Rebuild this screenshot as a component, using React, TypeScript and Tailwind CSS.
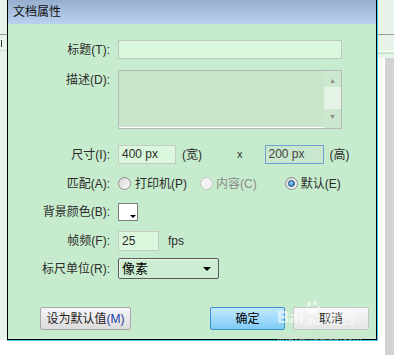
import React from 'react';

const font = { fontFamily: '"Liberation Sans", "Noto Sans CJK SC", sans-serif' };

function Radio({ checked, disabled }: { checked?: boolean; disabled?: boolean }) {
  return (
    <span
      className={`flex h-[13px] w-[13px] shrink-0 items-center justify-center rounded-full border ${
        disabled ? 'border-[#c4c4c4] bg-[#f2f2f2]' : 'border-[#8e8f8f] bg-gradient-to-br from-[#d6d6d6] to-[#fbfbfb]'
      }`}
    >
      {checked && <span className="h-[7px] w-[7px] rounded-full border border-[#1d4f7a] bg-[radial-gradient(circle_at_40%_35%,#8fd0ff,#1f6fb0)]" />}
    </span>
  );
}

function Label({ children, top }: { children: React.ReactNode; top?: boolean }) {
  return (
    <div className={`flex justify-end text-[12px] text-[#2c2c2c] ${top ? 'items-start pt-[1px]' : 'items-center'}`}>
      {children}
    </div>
  );
}

function Dialog() {
  return (
    <div className="flex h-[340px] w-[370px] flex-col border-x border-b border-black bg-[#c7ebcd]" style={font}>
      <div className="flex h-[24px] items-center bg-gradient-to-b from-[#97afcf] to-[#bad2ef] pl-[5px] text-[12px] text-[#111]">
        文档属性
      </div>

      <div className="grid grid-cols-[102px_1fr] gap-x-[8px] pt-[16px]">
        <Label>标题(T):</Label>
        <div className="h-[19px] w-[224px] border border-[#bcc6bc] bg-[#dbf8dc]" />

        <div className="h-[11px]" />
        <div className="h-[11px]" />

        <Label top>描述(D):</Label>
        <div className="flex h-[59px] w-[224px] border border-[#b6bab6] bg-[#c9e6cb] shadow-[inset_-1px_-1px_0_#fff]">
          <div className="flex-1" />
          <div className="flex w-[17px] flex-col items-center bg-[#cde8cf] text-[7px] text-[#888]">
            <span className="mt-[6px] leading-none">▲</span>
            <div className="mt-[3px] h-[22px] w-full bg-[#e4f3e5]" />
            <span className="mt-auto mb-[8px] leading-none">▼</span>
          </div>
        </div>

        <div className="h-[16px]" />
        <div className="h-[16px]" />

        <Label>尺寸(I):</Label>
        <div className="flex h-[19px] items-center text-[12px] text-[#2c2c2c]">
          <div className="flex h-[19px] w-[58px] items-center border border-[#c4ccc4] bg-[#dbf8dc] pl-[3px] pb-[2px]">400 px</div>
          <span className="ml-[6px]">(宽)</span>
          <span className="ml-[35px] pb-[1px] text-[11px]">x</span>
          <div className="ml-[22px] flex h-[19px] w-[59px] items-center border border-[#6f9fd4] bg-[#c9e7cc] pl-[3px] pb-[2px] text-[#444]">200 px</div>
          <span className="ml-[6px]">(高)</span>
        </div>

        <div className="h-[10px]" />
        <div className="h-[10px]" />

        <Label>匹配(A):</Label>
        <div className="flex h-[19px] items-center text-[12px] text-[#2c2c2c]">
          <Radio />
          <span className="ml-[4px]">打印机(P)</span>
          <span className="ml-[13px]"><Radio disabled /></span>
          <span className="ml-[3px] text-[#8a8a8a]">内容(C)</span>
          <span className="ml-[28px]"><Radio checked /></span>
          <span className="ml-[3px]">默认(E)</span>
        </div>

        <div className="h-[10px]" />
        <div className="h-[10px]" />

        <Label>背景颜色(B):</Label>
        <div className="flex h-[18px] items-center">
          <div className="relative h-[18px] w-[20px] border border-[#7c7c7c] bg-white">
            <span className="absolute right-[1px] bottom-[2px] h-0 w-0 border-x-[3px] border-t-[3px] border-x-transparent border-t-black" />
          </div>
        </div>

        <div className="h-[10px]" />
        <div className="h-[10px]" />

        <Label>帧频(F):</Label>
        <div className="flex h-[20px] items-center text-[12px] text-[#2c2c2c]">
          <div className="flex h-[20px] w-[41px] items-center border border-[#c4ccc4] bg-[#dbf8dc] pl-[3px]">25</div>
          <span className="ml-[9px]">fps</span>
        </div>

        <div className="h-[7px]" />
        <div className="h-[7px]" />

        <Label>标尺单位(R):</Label>
        <div className="flex h-[21px] w-[101px] items-center justify-between rounded-[2px] border border-[#5a5a5a] bg-[#cdeed2] pl-[3px] pr-[7px] text-[13px] text-black shadow-[inset_1px_1px_0_#e9f8ea]">
          <span>像素</span>
          <span className="h-0 w-0 border-x-[4px] border-t-[4px] border-x-transparent border-t-black" />
        </div>
      </div>

      <div className="mt-[28px] flex h-[23px] items-stretch pl-[32px] pr-[7px] text-[12px]">
        <div className="flex w-[91px] items-center justify-center rounded-[2px] border border-[#a9a9a9] bg-gradient-to-b from-[#f6f6f6] to-[#dcdcdc] text-[#222]">
          设为默认值<span className="text-[#1c3aa8]">(M)</span>
        </div>
        <div className="ml-auto flex w-[75px] items-center justify-center rounded-[2px] border border-[#3c8fd0] bg-gradient-to-b from-[#c4eafe] to-[#7ecbf6] text-black">
          确定
        </div>
        <div className="ml-[8px] flex w-[76px] items-center justify-center rounded-[2px] border border-[#c4c4c4] bg-gradient-to-b from-[#f8f8f8] to-[#e6e6e6] text-[#222]">
          取消
        </div>
      </div>
    </div>
  );
}

export default function App() {
  return (
    <div className="relative flex h-[355px] w-[394px] overflow-hidden bg-white">
      {/* window behind, left edge */}
      <div className="flex h-[340px] w-[7px] flex-col bg-[#e8f3ea]">
        <div className="mt-[34px] h-[1px] bg-[#9a9a9a]" />
        <div className="mt-[5px] ml-[1px] h-[7px] w-[1px] bg-[#333]" />
        <div className="mt-[3px] h-[1px] bg-[#c9e3cd]" />
      </div>

      <div className="flex flex-col">
        <div className="border-r border-b border-[#3dc6ef]">
          <Dialog />
        </div>
      </div>

      {/* window behind, right edge */}
      <div className="flex flex-1 flex-col">
        <div className="flex h-[58px] flex-col bg-[#e8f3ea]">
          <div className="mt-[34px] h-[1px] bg-[#9a9a9a]" />
          <div className="mt-[16px] h-[1px] bg-white" />
          <div className="h-[2px] bg-[#c6e7cc]" />
        </div>
        <div className="flex flex-1">
          <div className="w-[7px] bg-white" />
          <div className="flex-1 bg-[#d3d3d3]" />
        </div>
      </div>

      {/* baidu watermark */}
      <div className="pointer-events-none absolute left-[277px] top-[300px] flex flex-col items-start text-white opacity-60" style={font}>
        <div className="flex items-end leading-none">
          <span className="text-[17px] font-bold">Bai</span>
          <svg width="16" height="26" viewBox="0 0 16 26" className="mx-[2px]">
            <g fill="#fff">
              <ellipse cx="4" cy="4" rx="2" ry="2.6" />
              <ellipse cx="10" cy="3" rx="2" ry="2.6" />
              <ellipse cx="1.8" cy="9" rx="1.6" ry="2.1" />
              <ellipse cx="13.5" cy="8" rx="1.6" ry="2.1" />
              <path d="M7.5 7.5 C4 8 2.5 12 4 13 C5.5 14 9.5 14 11.5 13 C13 12 11 7 7.5 7.5 Z" />
              <text x="8" y="25" fontSize="11" fontWeight="bold" textAnchor="middle" fill="#fff">du</text>
            </g>
          </svg>
          <span className="text-[16px]">经验</span>
        </div>
        <span className="mt-[3px] text-[10px] tracking-wide text-[#e0e0e0]">jingyan.baidu.com</span>
      </div>
    </div>
  );
}
